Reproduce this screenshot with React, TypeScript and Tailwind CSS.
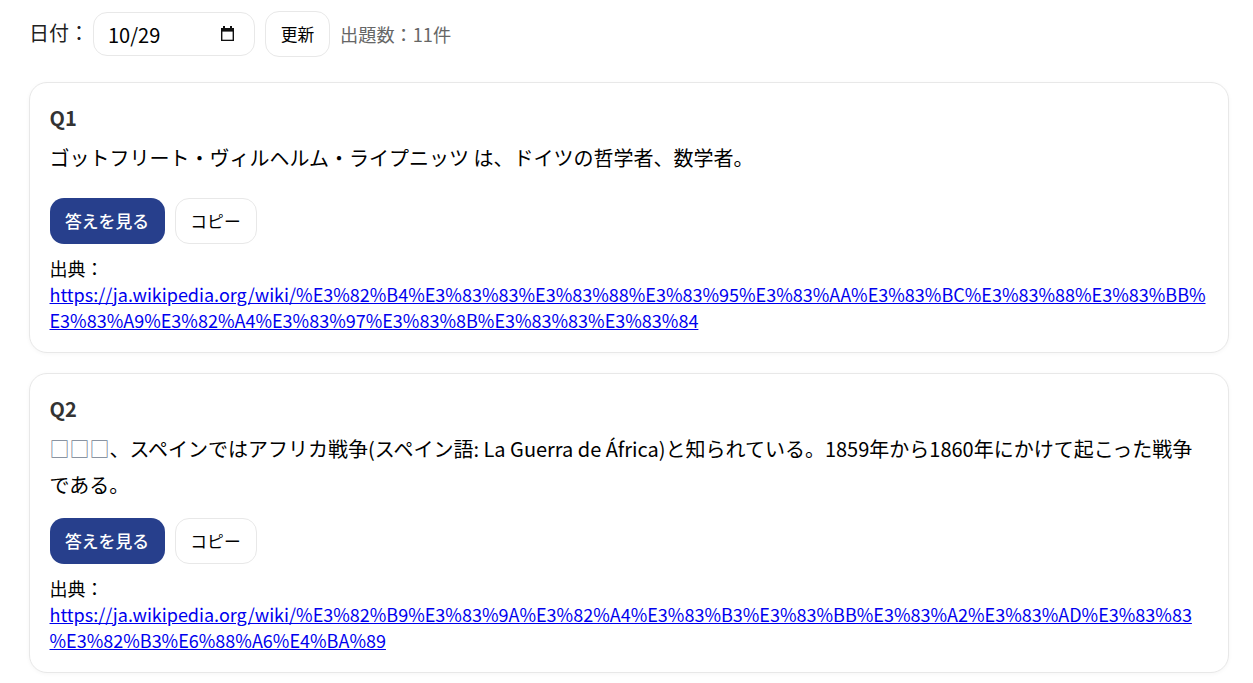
import React from "react";

const font = { fontFamily: '"Noto Sans CJK JP", "Noto Sans", sans-serif' };

function Card({ q, children, href1 }: { q: string; children: React.ReactNode; href1: string }) {
  return (
    <section className="mb-[20px] rounded-[18px] border border-[#e8e8e8] bg-white pl-[19.5px] pr-[20.5px] pt-[20px] pb-[19px] shadow-[0_1px_4px_rgba(0,0,0,0.04)]">
      <h2 className="text-[20px] font-bold leading-[30px] text-[#333]">{q}</h2>
      <p className="mt-[7px] min-h-[43px] text-[20px] leading-[36px] text-black">{children}</p>
      <div className="mt-[15px] flex gap-[10px]">
        <button className="h-[46px] w-[115px] rounded-[14px] bg-[#273f8c] pt-[1px] text-[16.8px] font-medium text-white">答えを見る</button>
        <button className="h-[46px] w-[82px] rounded-[14px] border border-[#e8e8e8] bg-white pt-[1px] text-[16.8px] text-black">コピー</button>
      </div>
      <div className="mt-[11px] text-[18px] leading-[26px] text-black">
        <div>出典：</div>
        <a href="#" className="block text-[#0000ee] underline [overflow-wrap:anywhere]">{href1}</a>
      </div>
    </section>
  );
}

export default function App() {
  return (
    <div style={font} className="min-h-[683px] overflow-hidden bg-white pl-[29px] pr-[24px] pt-[11px]">
      <header className="mb-[25px] flex items-center gap-[10px]">
        <label className="-mt-[3px] text-[20px] text-[#222]">日付：</label>
        <div className="relative ml-[-6px] flex h-[44px] w-[162px] items-center rounded-[14px] border border-[#e8e8e8] bg-white pl-[14px] pt-[1px] text-[20px] text-black">
          10/29
          <svg className="absolute left-[126px] top-[13px]" width="16" height="16" viewBox="0 0 16 16" fill="none">
            <path d="M3 0h2v2h5V0h2v2h2v13H1V2h2z" fill="#111" />
            <rect x="2.4" y="5.6" width="10.2" height="8.1" fill="white" />
          </svg>
        </div>
        <button className="h-[46px] w-[65px] rounded-[14px] border border-[#e8e8e8] bg-white pt-[1px] text-[16.8px] text-black">更新</button>
        <span className="pt-[2px] text-[18.2px] text-[#666]">出題数：11件</span>
      </header>
      <Card q="Q1" href1="https://ja.wikipedia.org/wiki/%E3%82%B4%E3%83%83%E3%83%88%E3%83%95%E3%83%AA%E3%83%BC%E3%83%88%E3%83%BB%E3%83%A9%E3%82%A4%E3%83%97%E3%83%8B%E3%83%83%E3%83%84">
        ゴットフリート・ヴィルヘルム・ライプニッツ は、ドイツの哲学者、数学者。
      </Card>
      <Card q="Q2" href1="https://ja.wikipedia.org/wiki/%E3%82%B9%E3%83%9A%E3%82%A4%E3%83%B3%E3%83%BB%E3%83%A2%E3%83%AD%E3%83%83%E3%82%B3%E6%88%A6%E4%BA%89">
        <span className="text-[#708090]">□□□</span>、スペインではアフリカ戦争(スペイン語: La Guerra de África)と知られている。1859年から1860年にかけて起こった戦争である。
      </Card>
    </div>
  );
}
